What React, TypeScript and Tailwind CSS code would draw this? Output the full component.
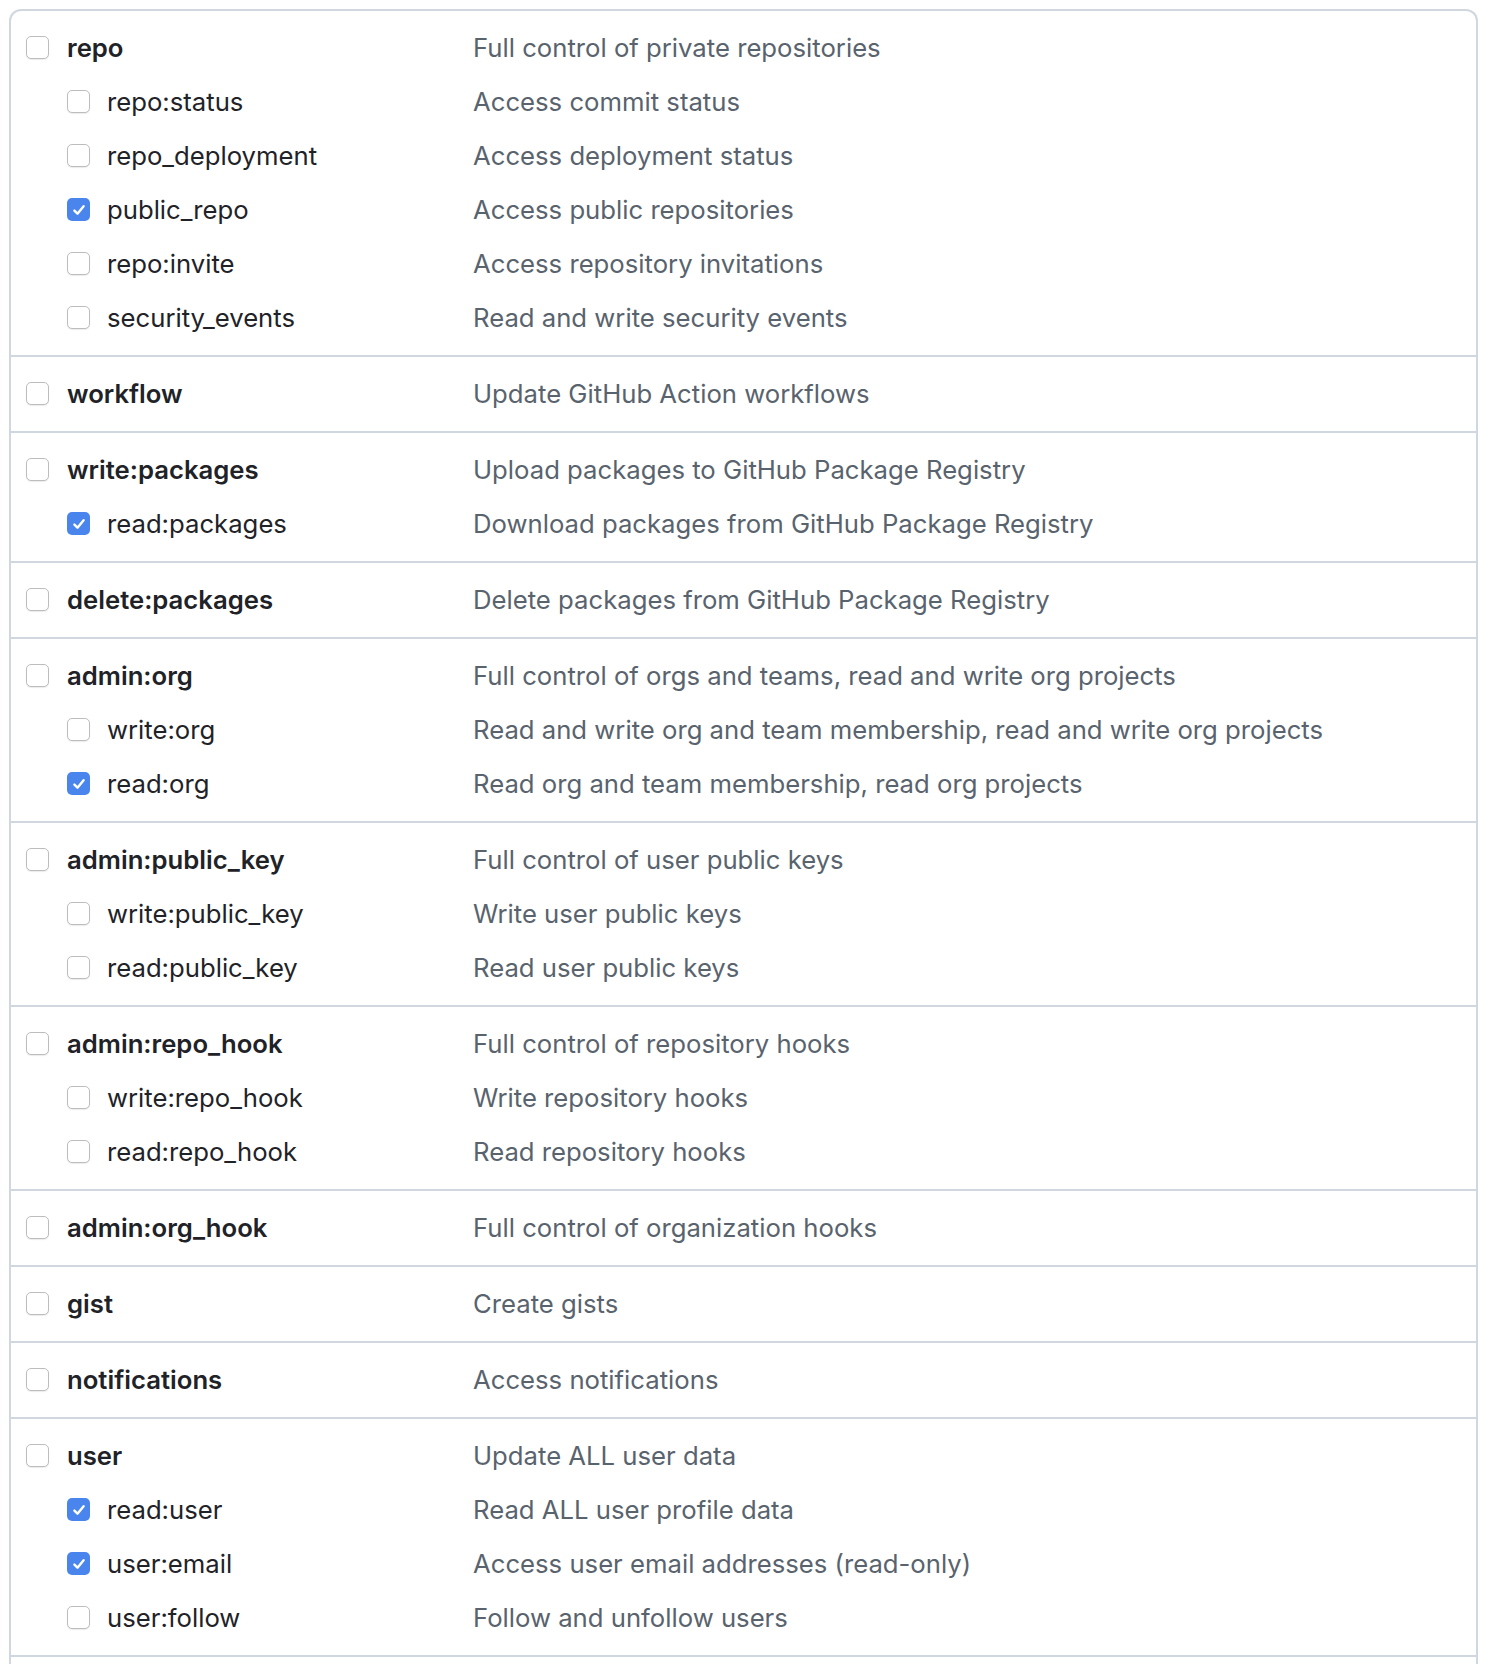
import React from "react";

type Scope = {
    name: string;
    desc: string;
    checked?: boolean;
    children?: Scope[];
};

const scopes: Scope[] = [
    {
        name: "repo",
        desc: "Full control of private repositories",
        children: [
            { name: "repo:status", desc: "Access commit status" },
            { name: "repo_deployment", desc: "Access deployment status" },
            { name: "public_repo", desc: "Access public repositories", checked: true },
            { name: "repo:invite", desc: "Access repository invitations" },
            { name: "security_events", desc: "Read and write security events" },
        ],
    },
    { name: "workflow", desc: "Update GitHub Action workflows" },
    {
        name: "write:packages",
        desc: "Upload packages to GitHub Package Registry",
        children: [{ name: "read:packages", desc: "Download packages from GitHub Package Registry", checked: true }],
    },
    { name: "delete:packages", desc: "Delete packages from GitHub Package Registry" },
    {
        name: "admin:org",
        desc: "Full control of orgs and teams, read and write org projects",
        children: [
            { name: "write:org", desc: "Read and write org and team membership, read and write org projects" },
            { name: "read:org", desc: "Read org and team membership, read org projects", checked: true },
        ],
    },
    {
        name: "admin:public_key",
        desc: "Full control of user public keys",
        children: [
            { name: "write:public_key", desc: "Write user public keys" },
            { name: "read:public_key", desc: "Read user public keys" },
        ],
    },
    {
        name: "admin:repo_hook",
        desc: "Full control of repository hooks",
        children: [
            { name: "write:repo_hook", desc: "Write repository hooks" },
            { name: "read:repo_hook", desc: "Read repository hooks" },
        ],
    },
    { name: "admin:org_hook", desc: "Full control of organization hooks" },
    { name: "gist", desc: "Create gists" },
    { name: "notifications", desc: "Access notifications" },
    {
        name: "user",
        desc: "Update ALL user data",
        children: [
            { name: "read:user", desc: "Read ALL user profile data", checked: true },
            { name: "user:email", desc: "Access user email addresses (read-only)", checked: true },
            { name: "user:follow", desc: "Follow and unfollow users" },
        ],
    },
];

function Checkbox({ checked }: { checked?: boolean }) {
    if (checked) {
        return (
            <span className="flex items-center justify-center w-[23px] h-[23px] rounded-[5px] bg-[#4a85ee] shrink-0">
                <svg width="16" height="16" viewBox="0 0 16 16" fill="none">
                    <path d="M3.4 8.6 L6.5 11.7 L12.6 4.2" stroke="white" strokeWidth="2.4" strokeLinecap="round" strokeLinejoin="round" />
                </svg>
            </span>
        );
    }
    return (
        <span className="block w-[23px] h-[23px] rounded-[5px] border-[1.5px] border-[#bdbdbd] bg-white shadow-[0_1px_1px_rgba(0,0,0,0.08)] shrink-0" />
    );
}

function Row({ scope, child }: { scope: Scope; child?: boolean }) {
    return (
        <div className="flex items-center h-[54px]">
            <div className={child ? "flex items-center w-[462px] pl-[56px] gap-[17px]" : "flex items-center w-[462px] pl-[15px] gap-[18px]"}>
                <Checkbox checked={scope.checked} />
                <span className={child ? "text-[#1f2328]" : "font-semibold text-[#1f2328]"}>{scope.name}</span>
            </div>
            <span className="text-[#59636e]">{scope.desc}</span>
        </div>
    );
}

export default function App() {
    return (
        <div className="bg-white h-[1664px] overflow-hidden pt-[9px] pl-[9px] pr-[10px] font-['Inter','Liberation_Sans',sans-serif] text-[25.7px]">
            <div className="border-2 border-b-0 border-[#d0d7de] rounded-t-[12px]">
                {scopes.map((scope, i) => (
                    <div key={scope.name} className={i === 0 ? "py-[10px]" : "py-[10px] border-t-2 border-[#d0d7de]"}>
                        <Row scope={scope} />
                        {scope.children?.map((c) => (
                            <Row key={c.name} scope={c} child />
                        ))}
                    </div>
                ))}
                <div className="h-[40px] border-t-2 border-[#d0d7de]" />
            </div>
        </div>
    );
}
